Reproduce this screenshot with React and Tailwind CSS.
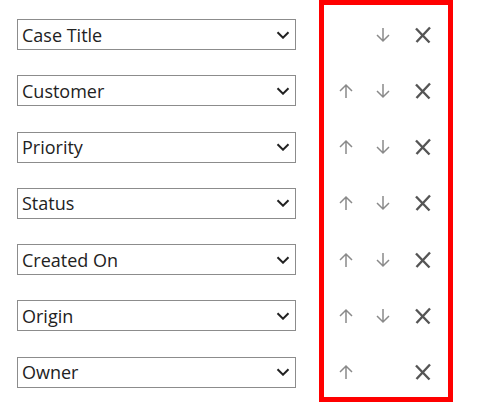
import React from "react";

const rows = [
  { label: "Case Title", up: false, down: true },
  { label: "Customer", up: true, down: true },
  { label: "Priority", up: true, down: true },
  { label: "Status", up: true, down: true },
  { label: "Created On", up: true, down: true },
  { label: "Origin", up: true, down: true },
  { label: "Owner", up: true, down: false },
];

function Chevron() {
  return (
    <svg width="14" height="8" viewBox="0 0 14 8" fill="none">
      <path d="M1.5 1.2l5.5 5.5 5.5-5.5" stroke="#222" strokeWidth="2" />
    </svg>
  );
}

function ArrowUp() {
  return (
    <svg width="14" height="16" viewBox="0 0 14 16" fill="none">
      <path d="M7 15V2M1 8l6-6 6 6" stroke="#8a8a8a" strokeWidth="1.5" />
    </svg>
  );
}

function ArrowDown() {
  return (
    <svg width="14" height="16" viewBox="0 0 14 16" fill="none">
      <path d="M7 1v13M1 8l6 6 6-6" stroke="#8a8a8a" strokeWidth="1.5" />
    </svg>
  );
}

function Cross() {
  return (
    <svg width="18" height="18" viewBox="0 0 18 18" fill="none">
      <path d="M2 2.5l13.5 14M16 1.5L2.5 16" stroke="#555" strokeWidth="2.4" />
    </svg>
  );
}

export default function App() {
  return (
    <div
      className="w-[503px] h-[402px] bg-white flex overflow-hidden"
      style={{ fontFamily: '"Open Sans", "Noto Sans", sans-serif' }}
    >
      <div className="flex flex-col pt-[19px] pl-[17px] w-[319px]">
        {rows.map((row) => (
          <div key={row.label} className="h-[56.3px] shrink-0">
            <div className="w-[279px] h-[31px] border border-[#8c8c8c] flex items-center justify-between pl-[4px] pr-[5px]">
              <span className="text-[18px] text-[#222] leading-none">{row.label}</span>
              <Chevron />
            </div>
          </div>
        ))}
      </div>
      <div className="w-[134px] h-[402px] border-[5px] border-[#ff0000] flex flex-col pt-[14px]">
        {rows.map((row) => (
          <div key={row.label} className="h-[56.3px] shrink-0">
            <div className="h-[31px] flex items-center">
              <div className="w-[44px] flex justify-center">{row.up && <ArrowUp />}</div>
              <div className="w-[30px] flex justify-center">{row.down && <ArrowDown />}</div>
              <div className="w-[50px] flex justify-center">
                <Cross />
              </div>
            </div>
          </div>
        ))}
      </div>
    </div>
  );
}
